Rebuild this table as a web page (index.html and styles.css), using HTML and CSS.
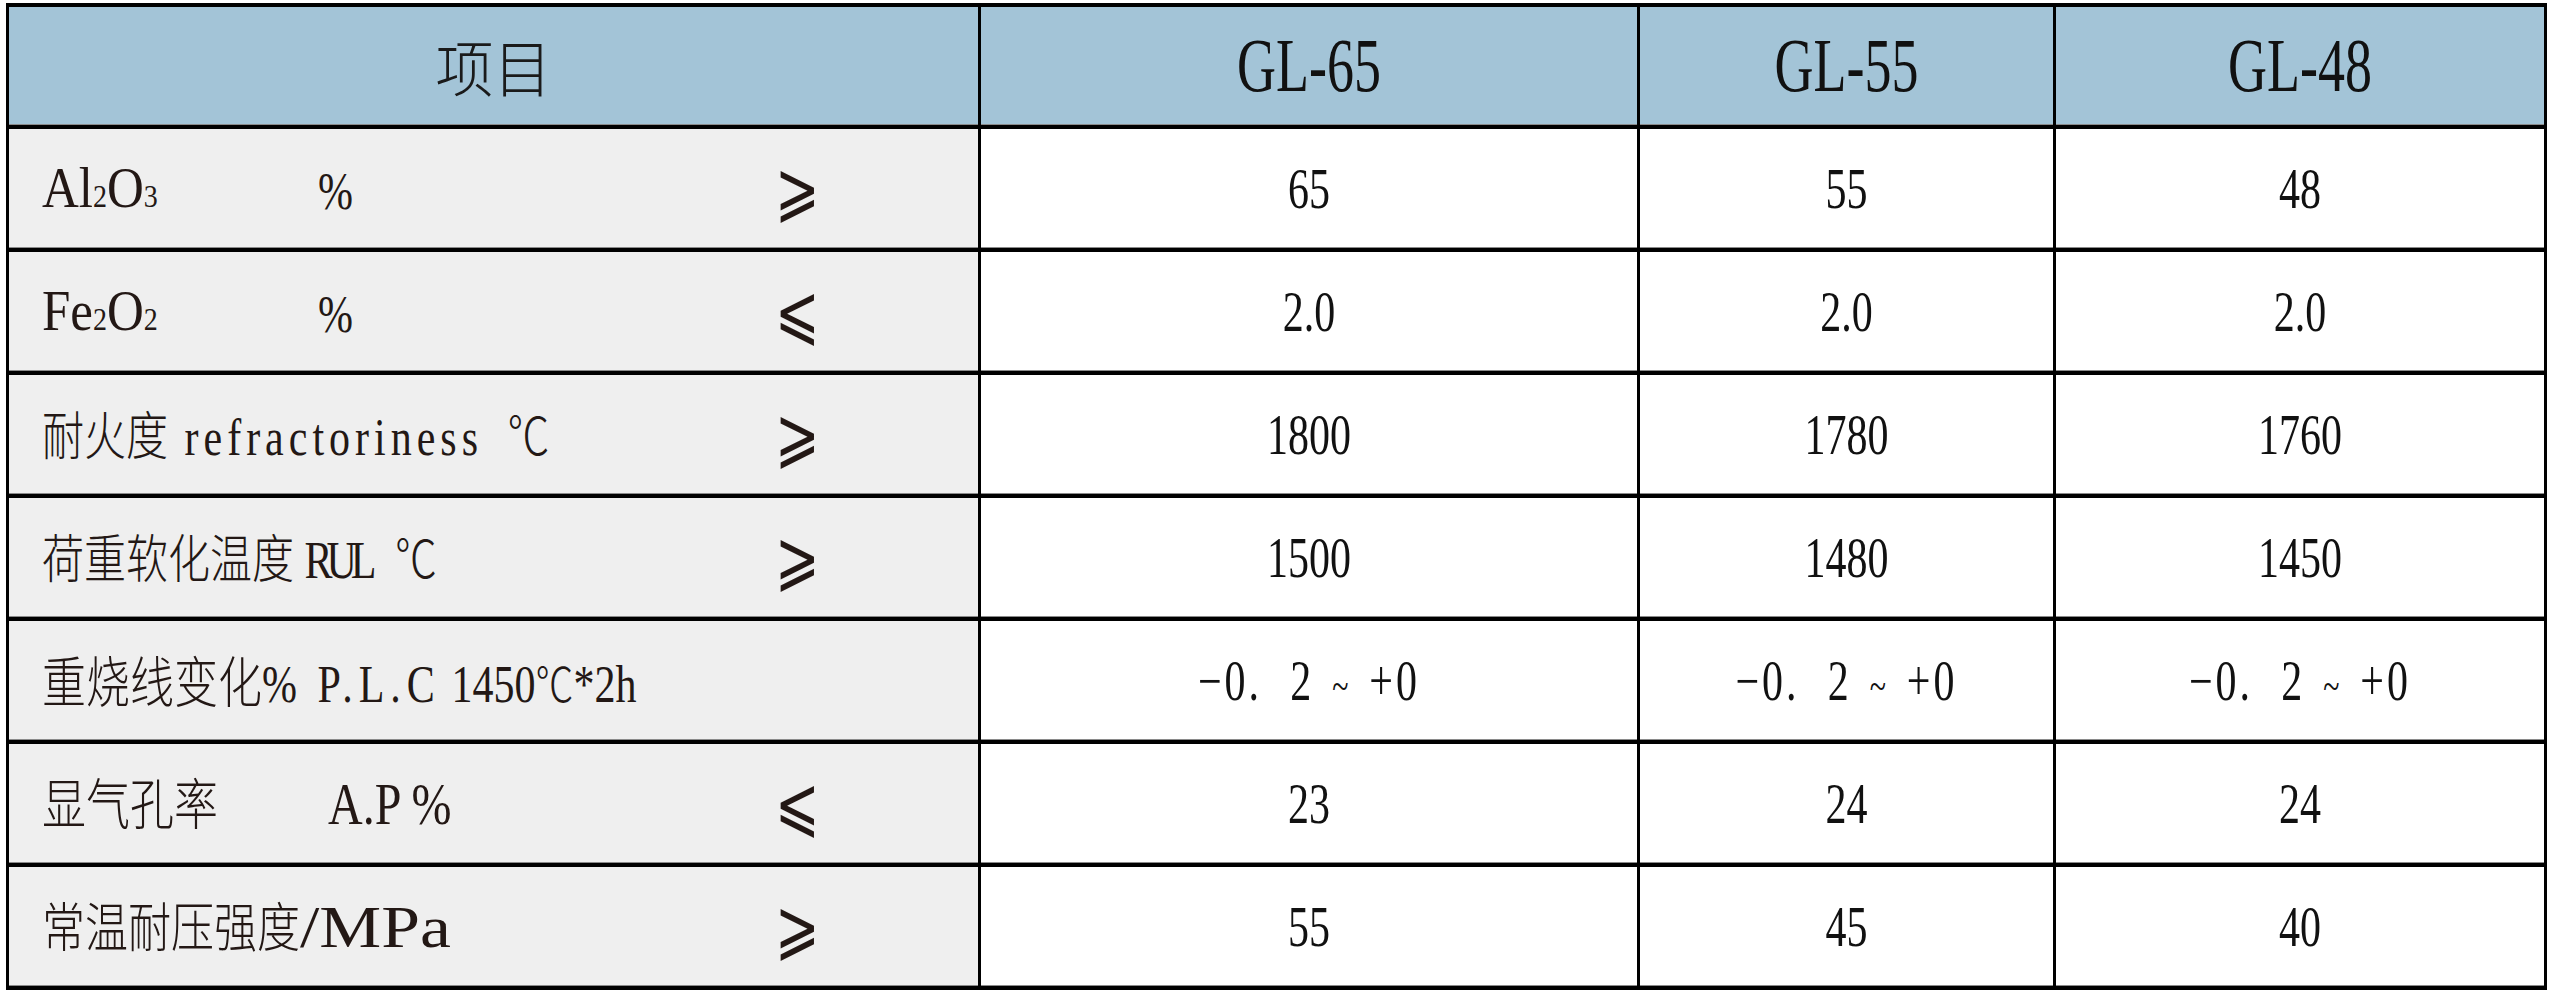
FILE: index.html
```html
<!DOCTYPE html>
<html lang="zh-CN">
<head>
<meta charset="utf-8">
<title>GL 系列技术指标</title>
<link rel="stylesheet" href="styles.css">
</head>
<body>
<div class="wrap">
<table class="spec">
  <thead>
    <tr class="head-row">
      <th class="col-item"><span class="t cjk head-cjk">项目</span></th>
      <th class="col-a"><span class="t head-lat">GL-65</span></th>
      <th class="col-b"><span class="t head-lat">GL-55</span></th>
      <th class="col-c"><span class="t head-lat">GL-48</span></th>
    </tr>
  </thead>
  <tbody>
    <tr>
      <td class="item">
        <div class="item-grid">
          <div class="label"><span class="chem t">Al<span class="sub">2</span>O<span class="sub">3</span></span><span class="unit t">%</span></div>
          <span class="sign">⩾</span>
        </div>
      </td>
      <td><span class="t val">65</span></td>
      <td><span class="t val">55</span></td>
      <td><span class="t val">48</span></td>
    </tr>
    <tr>
      <td class="item">
        <div class="item-grid">
          <div class="label"><span class="chem t">Fe<span class="sub">2</span>O<span class="sub">2</span></span><span class="unit t">%</span></div>
          <span class="sign">⩽</span>
        </div>
      </td>
      <td><span class="t val">2.0</span></td>
      <td><span class="t val">2.0</span></td>
      <td><span class="t val">2.0</span></td>
    </tr>
    <tr>
      <td class="item">
        <div class="item-grid">
          <div class="label"><span class="t"><span class="cjk">耐火度</span> <span class="lat lat-wide">refractoriness</span> <span class="cjk deg">℃</span></span></div>
          <span class="sign">⩾</span>
        </div>
      </td>
      <td><span class="t val">1800</span></td>
      <td><span class="t val">1780</span></td>
      <td><span class="t val">1760</span></td>
    </tr>
    <tr>
      <td class="item">
        <div class="item-grid">
          <div class="label"><span class="t"><span class="cjk">荷重软化温度</span> <span class="lat lat-narrow">RUL</span> <span class="cjk deg">℃</span></span></div>
          <span class="sign">⩾</span>
        </div>
      </td>
      <td><span class="t val">1500</span></td>
      <td><span class="t val">1480</span></td>
      <td><span class="t val">1450</span></td>
    </tr>
    <tr>
      <td class="item">
        <div class="item-grid">
          <div class="label"><span class="t"><span class="cjk cjk-l">重烧线变化</span><span class="lat">%</span> <span class="lat lat-plc">P.L.C</span> <span class="lat">1450</span><span class="cjk deg-tight">℃</span><span class="lat">*2h</span></span></div>
          <span class="sign"></span>
        </div>
      </td>
      <td><span class="t val range">−0.<span class="gap"></span>2<span class="tilde">~</span>+0</span></td>
      <td><span class="t val range">−0.<span class="gap"></span>2<span class="tilde">~</span>+0</span></td>
      <td><span class="t val range">−0.<span class="gap"></span>2<span class="tilde">~</span>+0</span></td>
    </tr>
    <tr>
      <td class="item">
        <div class="item-grid">
          <div class="label"><span class="t"><span class="cjk cjk-l">显气孔率</span><span class="lat ap">A.P %</span></span></div>
          <span class="sign">⩽</span>
        </div>
      </td>
      <td><span class="t val">23</span></td>
      <td><span class="t val">24</span></td>
      <td><span class="t val">24</span></td>
    </tr>
    <tr>
      <td class="item">
        <div class="item-grid">
          <div class="label"><span class="t"><span class="cjk cjk-xl">常温耐压强度</span><span class="lat mpa">/MPa</span></span></div>
          <span class="sign">⩾</span>
        </div>
      </td>
      <td><span class="t val">55</span></td>
      <td><span class="t val">45</span></td>
      <td><span class="t val">40</span></td>
    </tr>
  </tbody>
</table>
</div>
</body>
</html>
```

FILE: styles.css
```css
html, body {
  margin: 0;
  padding: 0;
  background: #ffffff;
}

body {
  font-family: "Liberation Serif", "Noto Sans CJK SC", serif;
  color: #111111;
}

.wrap {
  padding: 3px 0 0 6px;
}

.spec {
  box-sizing: border-box;
  width: 2541px;
  table-layout: fixed;
  border-collapse: separate;
  border-spacing: 0;
  border-top: 4px solid #000;
  border-left: 3px solid #000;
}

.spec th,
.spec td {
  box-sizing: border-box;
  padding: 0;
  border-right: 3px solid #000;
  border-bottom: 4px solid #000;
  text-align: center;
  vertical-align: middle;
  background: #ffffff;
  font-weight: normal;
  overflow: hidden;
  white-space: nowrap;
  box-shadow: inset 0 -1px 0 #8a8a8a;
}

.spec thead th {
  background: #a3c4d7;
}

.head-row {
  height: 122px;
}

.spec tbody tr {
  height: 123px;
}

.col-item { width: 972px; }
.col-a { width: 659px; }
.col-b { width: 416px; }
.col-c { width: 491px; }

.t {
  display: inline-block;
  transform: scaleY(1.25);
}

.cjk {
  font-family: "Noto Sans CJK SC", sans-serif;
}

.head-cjk {
  font-size: 58px;
  font-weight: 300;
  color: #1a1a1a;
  transform: scaleY(1.05);
}

.head-lat {
  font-size: 54px;
  color: #111;
  transform: scaleY(1.4);
}

.val {
  font-size: 42px;
  color: #111;
  transform: scaleY(1.34);
}

.range {
  letter-spacing: 3px;
}

.range .gap {
  display: inline-block;
  width: 28px;
}

.range .tilde {
  display: inline-block;
  margin: 0 18px;
  font-size: 30px;
}

/* first column */
.spec td.item {
  background: #efefef;
  text-align: left;
  color: #231815;
}

.item-grid {
  display: grid;
  grid-template-columns: 733px 1fr;
  align-items: center;
  padding-left: 33px;
}

.label {
  font-size: 42px;
  line-height: 1;
}

.label .cjk {
  font-weight: 300;
}

.chem {
  width: 276px;
  font-size: 51px;
  transform: scaleY(1.12);
  transform-origin: left center;
}

.sub {
  font-size: 28px;
}

.unit {
  font-size: 42px;
}

.lat-wide {
  letter-spacing: 5px;
  margin-left: 6px;
}

.lat-narrow {
  letter-spacing: -6px;
}

.deg {
  margin-left: 14px;
}

.cjk-l {
  font-size: 44px;
}

.cjk-xl {
  font-size: 43px;
}

.lat-plc {
  letter-spacing: 6px;
  margin-left: 10px;
}

.deg-tight {
  font-size: 38px;
}

.ap {
  margin-left: 110px;
  font-size: 48px;
}

.mpa {
  display: inline-block;
  font-size: 48px;
  transform: scaleX(1.45);
  transform-origin: left center;
}

.sign {
  font-family: "DejaVu Sans", sans-serif;
  font-size: 56px;
  font-weight: 200;
  line-height: 1;
  color: #231815;
  display: inline-block;
  transform: scale(0.95, 1.32);
  transform-origin: left center;
}
```
